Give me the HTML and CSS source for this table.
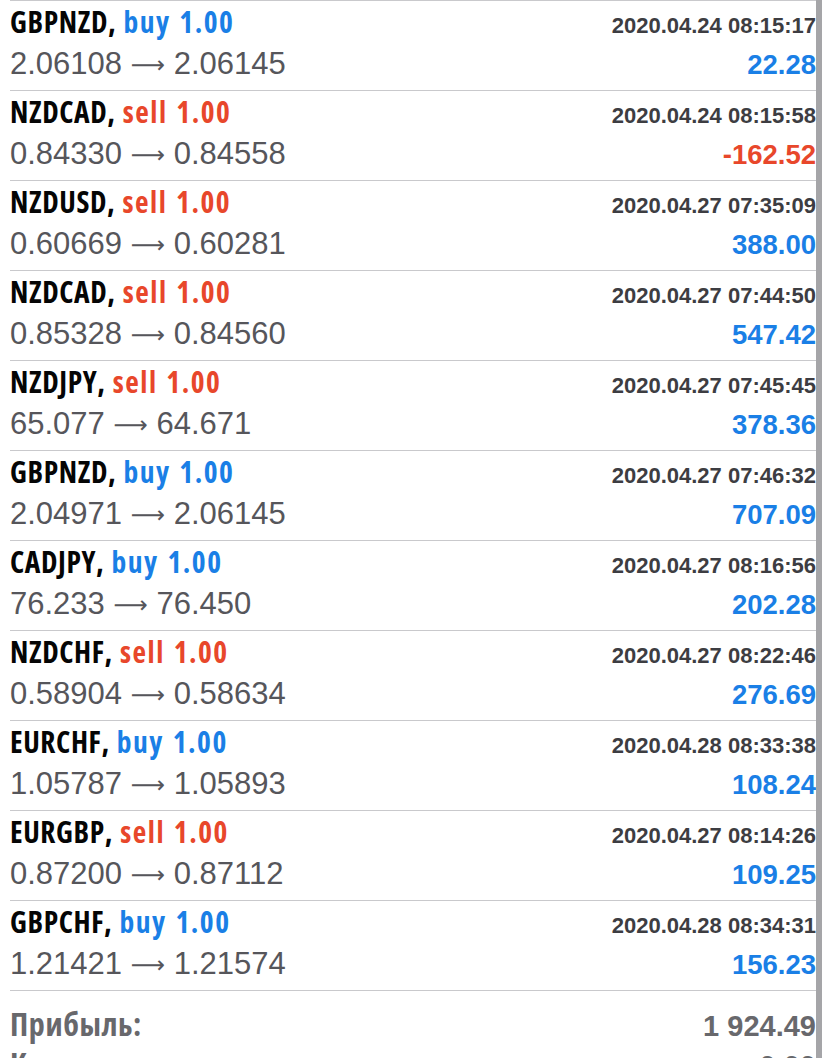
FILE: index.html
```html
<!DOCTYPE html>
<html lang="ru">
<head>
<meta charset="utf-8">
<title>History</title>
<link rel="stylesheet" href="styles.css">
</head>
<body>
<div class="screen">
  <ul class="deals">
    <li class="deal">
      <div class="line top"><span class="title"><span class="sym">GBPNZD,</span> <span class="side buy">buy 1.00</span></span><span class="time">2020.04.24 08:15:17</span></div>
      <div class="line bottom"><span class="price">2.06108 <span class="arrow">⟶</span> 2.06145</span><span class="pl buy">22.28</span></div>
    </li>
    <li class="deal">
      <div class="line top"><span class="title"><span class="sym">NZDCAD,</span> <span class="side sell">sell 1.00</span></span><span class="time">2020.04.24 08:15:58</span></div>
      <div class="line bottom"><span class="price">0.84330 <span class="arrow">⟶</span> 0.84558</span><span class="pl sell">-162.52</span></div>
    </li>
    <li class="deal">
      <div class="line top"><span class="title"><span class="sym">NZDUSD,</span> <span class="side sell">sell 1.00</span></span><span class="time">2020.04.27 07:35:09</span></div>
      <div class="line bottom"><span class="price">0.60669 <span class="arrow">⟶</span> 0.60281</span><span class="pl buy">388.00</span></div>
    </li>
    <li class="deal">
      <div class="line top"><span class="title"><span class="sym">NZDCAD,</span> <span class="side sell">sell 1.00</span></span><span class="time">2020.04.27 07:44:50</span></div>
      <div class="line bottom"><span class="price">0.85328 <span class="arrow">⟶</span> 0.84560</span><span class="pl buy">547.42</span></div>
    </li>
    <li class="deal">
      <div class="line top"><span class="title"><span class="sym">NZDJPY,</span> <span class="side sell">sell 1.00</span></span><span class="time">2020.04.27 07:45:45</span></div>
      <div class="line bottom"><span class="price">65.077 <span class="arrow">⟶</span> 64.671</span><span class="pl buy">378.36</span></div>
    </li>
    <li class="deal">
      <div class="line top"><span class="title"><span class="sym">GBPNZD,</span> <span class="side buy">buy 1.00</span></span><span class="time">2020.04.27 07:46:32</span></div>
      <div class="line bottom"><span class="price">2.04971 <span class="arrow">⟶</span> 2.06145</span><span class="pl buy">707.09</span></div>
    </li>
    <li class="deal">
      <div class="line top"><span class="title"><span class="sym">CADJPY,</span> <span class="side buy">buy 1.00</span></span><span class="time">2020.04.27 08:16:56</span></div>
      <div class="line bottom"><span class="price">76.233 <span class="arrow">⟶</span> 76.450</span><span class="pl buy">202.28</span></div>
    </li>
    <li class="deal">
      <div class="line top"><span class="title"><span class="sym">NZDCHF,</span> <span class="side sell">sell 1.00</span></span><span class="time">2020.04.27 08:22:46</span></div>
      <div class="line bottom"><span class="price">0.58904 <span class="arrow">⟶</span> 0.58634</span><span class="pl buy">276.69</span></div>
    </li>
    <li class="deal">
      <div class="line top"><span class="title"><span class="sym">EURCHF,</span> <span class="side buy">buy 1.00</span></span><span class="time">2020.04.28 08:33:38</span></div>
      <div class="line bottom"><span class="price">1.05787 <span class="arrow">⟶</span> 1.05893</span><span class="pl buy">108.24</span></div>
    </li>
    <li class="deal">
      <div class="line top"><span class="title"><span class="sym">EURGBP,</span> <span class="side sell">sell 1.00</span></span><span class="time">2020.04.27 08:14:26</span></div>
      <div class="line bottom"><span class="price">0.87200 <span class="arrow">⟶</span> 0.87112</span><span class="pl buy">109.25</span></div>
    </li>
    <li class="deal">
      <div class="line top"><span class="title"><span class="sym">GBPCHF,</span> <span class="side buy">buy 1.00</span></span><span class="time">2020.04.28 08:34:31</span></div>
      <div class="line bottom"><span class="price">1.21421 <span class="arrow">⟶</span> 1.21574</span><span class="pl buy">156.23</span></div>
    </li>
  </ul>
  <div class="summary">
    <div class="sum-line"><span class="sum-label">Прибыль:</span><span class="sum-value">1 924.49</span></div>
    <div class="sum-line"><span class="sum-label">Кредит:</span><span class="sum-value">0.00</span></div>
  </div>
</div>
<div class="scrollbar"></div>
</body>
</html>
```

FILE: styles.css
```css
html, body {
  margin: 0;
  padding: 0;
  background: #ffffff;
  overflow: hidden;
}

body {
  width: 828px;
  height: 1058px;
  font-family: "Liberation Sans", Arial, sans-serif;
}

.screen {
  margin: 0 12px 0 10px;
}

.deals {
  list-style: none;
  margin: 0;
  padding: 0;
  border-top: 1px solid #c9c9cc;
}

.deal {
  height: 90px;
  box-sizing: border-box;
  padding-top: 3px;
  border-bottom: 1px solid #c9c9cc;
}

.line {
  display: flex;
  justify-content: space-between;
  align-items: baseline;
}

.line.top {
  height: 36px;
  line-height: 36px;
}

.line.bottom {
  height: 48px;
  line-height: 48px;
}

.title {
  font-family: "Open Sans", "Liberation Sans", sans-serif;
  font-stretch: 75%;
  font-weight: bold;
  font-size: 29.5px;
  white-space: nowrap;
  word-spacing: 2px;
}

.sym {
  color: #050505;
  letter-spacing: 0.6px;
}

.side {
  letter-spacing: 1.5px;
}

.buy {
  color: #1a7fe6;
}

.sell {
  color: #e8472b;
}

.time {
  font-weight: bold;
  font-size: 22px;
  color: #3d3d42;
}

.price {
  font-size: 31px;
  color: #56565b;
  white-space: nowrap;
}

.arrow {
  font-family: "DejaVu Sans", sans-serif;
  font-size: 24px;
  vertical-align: 1px;
}

.pl {
  font-weight: bold;
  font-size: 27.5px;
}

.summary {
  padding-top: 13px;
}

.sum-line {
  display: flex;
  justify-content: space-between;
  align-items: baseline;
  height: 40px;
  line-height: 40px;
}

.sum-label {
  font-family: "Open Sans", "Liberation Sans", sans-serif;
  font-stretch: 75%;
  font-weight: bold;
  font-size: 32px;
  letter-spacing: 0.6px;
  color: #68686c;
}

.sum-value {
  font-weight: bold;
  font-size: 29px;
  color: #68686c;
}

.scrollbar {
  position: fixed;
  top: 0;
  bottom: 0;
  left: 816px;
  width: 6px;
  background: #a5a5a8;
}
```
